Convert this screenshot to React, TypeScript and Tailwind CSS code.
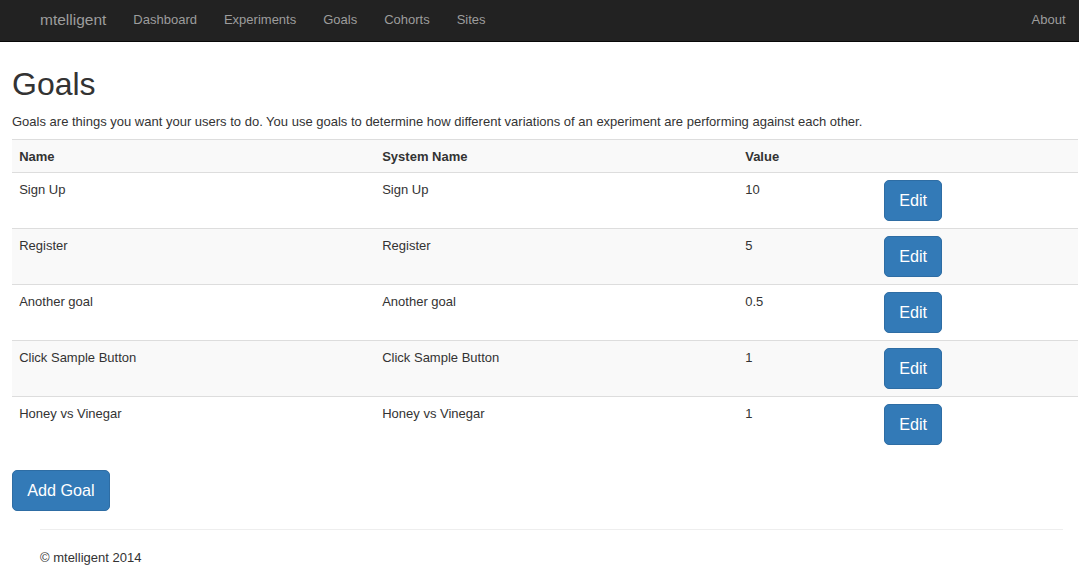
import React from "react";

const goals = [
  { name: "Sign Up", system: "Sign Up", value: "10" },
  { name: "Register", system: "Register", value: "5" },
  { name: "Another goal", system: "Another goal", value: "0.5" },
  { name: "Click Sample Button", system: "Click Sample Button", value: "1" },
  { name: "Honey vs Vinegar", system: "Honey vs Vinegar", value: "1" },
];

const navLinks = ["Dashboard", "Experiments", "Goals", "Cohorts", "Sites"];

function Btn({ children }: { children: React.ReactNode }) {
  return (
    <button className="bg-[#337ab7] border border-[#2e6da4] text-white text-[16.2px] leading-[21px] py-[9px] px-[14.2px] rounded-[5px] whitespace-nowrap">
      {children}
    </button>
  );
}

export default function App() {
  return (
    <div
      className="min-h-[570px] bg-white text-[#333] text-[13px] leading-[18px]"
      style={{ fontFamily: '"Liberation Sans", Arial, sans-serif' }}
    >
      <nav className="h-[42px] bg-[#222] border-b border-[#080808] flex items-center justify-between pb-[2px]">
        <div className="flex items-center">
          <a className="ml-[26.5px] px-[13.5px] text-[15.5px] text-[#9d9d9d]">mtelligent</a>
          <ul className="flex">
            {navLinks.map((l) => (
              <li key={l}>
                <a className="px-[13.5px] text-[#9d9d9d]">{l}</a>
              </li>
            ))}
          </ul>
        </div>
        <ul className="flex">
          <li>
            <a className="px-[13.5px] text-[#9d9d9d]">About</a>
          </li>
        </ul>
      </nav>

      <main className="pl-[12px] pr-[1px]">
        <h1 className="mt-[25px] mb-[10.5px] text-[32px] leading-[35.6px] font-normal">Goals</h1>
        <p className="mb-[8px]">
          Goals are things you want your users to do. You use goals to determine how different variations of an
          experiment are performing against each other.
        </p>

        <div className="mb-[18px]">
          <div className="grid grid-cols-[363px_363px_138px_1fr] h-[33px] border-t border-[#ddd] bg-[#f9f9f9] font-bold">
            <div className="px-[7.2px] pt-[8px]">Name</div>
            <div className="px-[7.2px] pt-[8px]">System Name</div>
            <div className="px-[7.2px] pt-[8px]">Value</div>
            <div className="px-[7.2px] pt-[8px]"></div>
          </div>
          {goals.map((g, i) => (
            <div
              key={g.name}
              className={
                "grid grid-cols-[363px_363px_138px_1fr] h-[56px] border-t border-[#ddd] " +
                (i % 2 === 1 ? "bg-[#f9f9f9]" : "bg-white")
              }
            >
              <div className="px-[7.2px] pt-[8px]">{g.name}</div>
              <div className="px-[7.2px] pt-[8px]">{g.system}</div>
              <div className="px-[7.2px] pt-[8px]">{g.value}</div>
              <div className="pl-[8px] pr-[7.2px] pt-[7px]">
                <Btn>Edit</Btn>
              </div>
            </div>
          ))}
        </div>

        <Btn>Add Goal</Btn>
      </main>

      <footer className="ml-[40px] mr-[16px] mt-[18px] border-t border-[#eee] pt-[19px] pb-[10px]">
        <p>© mtelligent 2014</p>
      </footer>
    </div>
  );
}
